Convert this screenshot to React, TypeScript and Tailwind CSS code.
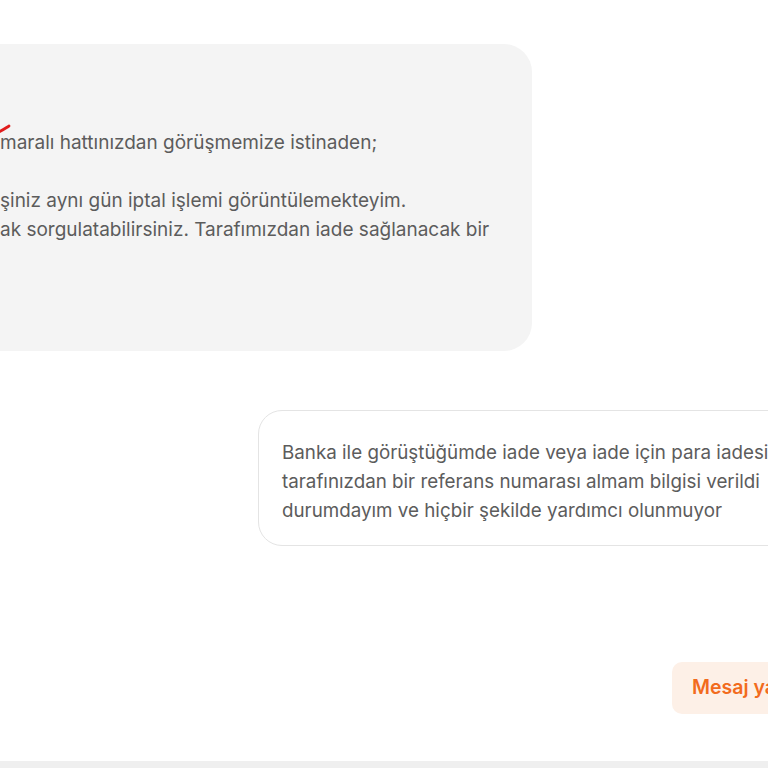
const FONT = { fontFamily: 'Inter, "Noto Sans", sans-serif' }

export default function App() {
  return (
    <div className="flex h-[768px] w-[768px] flex-col overflow-hidden bg-white text-[#5c5c5c]" style={FONT}>
      {/* incoming message — continues past the left edge */}
      <div className="mt-[44px] ml-[-220px] relative h-[307px] w-[752px] shrink-0 rounded-[28px] bg-[#f4f4f4] pl-[220px] pt-[26px] text-[19px]">
        <div className="h-[29px] leading-[29px]" />
        <div className="h-[29px] leading-[29px]" />
        <div className="relative h-[29px] whitespace-nowrap leading-[29px]">
          <svg className="absolute left-[-2px] top-[-4px]" width="14" height="10" viewBox="0 0 14 10" aria-hidden="true">
            <path d="M1 8 C4 6.5 7 4.5 11 2" stroke="#e11d1d" strokeWidth="2.8" strokeLinecap="round" fill="none" />
          </svg>
          maralı hattınızdan görüşmemize istinaden;
        </div>
        <div className="h-[29px] leading-[29px]" />
        <div className="h-[29px] whitespace-nowrap leading-[29px]">şiniz aynı gün iptal işlemi görüntülemekteyim.</div>
        <div className="h-[29px] whitespace-nowrap leading-[29px]">ak sorgulatabilirsiniz. Tarafımızdan iade sağlanacak bir</div>
      </div>

      {/* outgoing message — continues past the right edge */}
      <div className="mt-[59px] ml-[258px] h-[136px] w-[620px] shrink-0 rounded-[24px] border border-[#e4e4e4] bg-white pl-[23px] pt-[27px] text-[18.8px]">
        <div className="h-[29px] whitespace-nowrap leading-[29px]">Banka ile görüştüğümde iade veya iade için para iadesi</div>
        <div className="h-[29px] whitespace-nowrap leading-[29px]">tarafınızdan bir referans numarası almam bilgisi verildi</div>
        <div className="h-[29px] whitespace-nowrap leading-[29px]">durumdayım ve hiçbir şekilde yardımcı olunmuyor</div>
      </div>

      <div className="mt-[116px] ml-[672px] flex h-[52px] w-[150px] shrink-0 items-center rounded-[10px] bg-[#fdf0e7] pl-[20px]">
        <span className="whitespace-nowrap text-[19.5px] font-semibold text-[#f26b1d]">Mesaj ya</span>
      </div>

      <div className="mt-auto h-[7px] shrink-0 bg-[#efefef]" />
    </div>
  )
}
